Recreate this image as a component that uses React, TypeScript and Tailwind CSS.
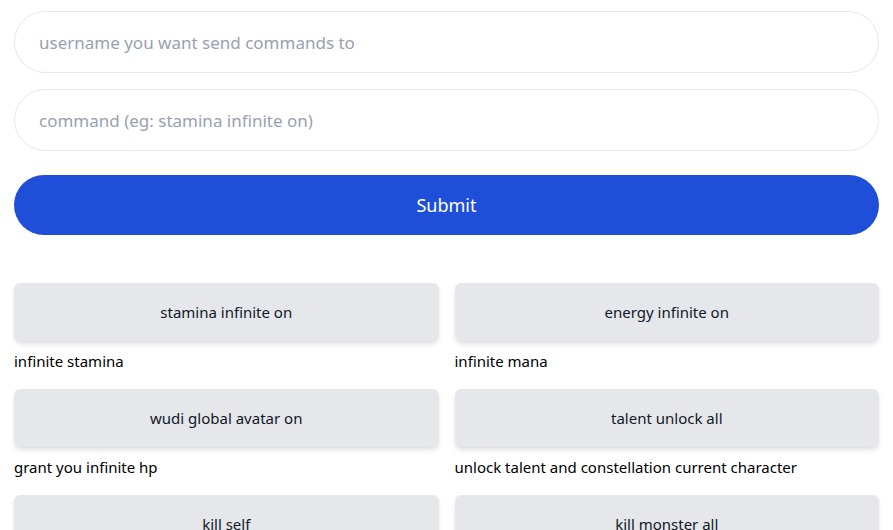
import React from 'react';

const COMMANDS = [
  { cmd: 'stamina infinite on', desc: 'infinite stamina' },
  { cmd: 'energy infinite on', desc: 'infinite mana' },
  { cmd: 'wudi global avatar on', desc: 'grant you infinite hp' },
  { cmd: 'talent unlock all', desc: 'unlock talent and constellation current character' },
  { cmd: 'kill self', desc: 'kill yourself' },
  { cmd: 'kill monster all', desc: 'kill all monsters around you' },
];

export default function App() {
  return (
    <div className="min-h-screen bg-white px-[14px] pt-[11px] text-black" style={{ fontFamily: '"Noto Sans", "Open Sans", sans-serif' }}>
      <form className="flex flex-col" onSubmit={(e) => e.preventDefault()}>
        <input
          type="text"
          placeholder="username you want send commands to"
          className="h-[62px] w-full rounded-full border border-gray-200 px-[24px] text-[17px] outline-none placeholder:text-gray-400"
        />
        <input
          type="text"
          placeholder="command (eg: stamina infinite on)"
          className="mt-[16px] h-[62px] w-full rounded-full border border-gray-200 px-[24px] text-[17px] outline-none placeholder:text-gray-400"
        />
        <button type="submit" className="mt-[24px] h-[60px] w-full rounded-full bg-[#1f4fd8] text-[18px] text-white">
          Submit
        </button>
      </form>

      <div className="mt-[48px] grid grid-cols-2 gap-x-4">
        {COMMANDS.map((c) => (
          <div key={c.cmd} className="mb-4">
            <button className="h-[58px] w-full rounded-md bg-gray-200 text-[15px] text-gray-900 shadow-md">
              {c.cmd}
            </button>
            <p className="mt-2 text-[15px] leading-6">{c.desc}</p>
          </div>
        ))}
      </div>
    </div>
  );
}
